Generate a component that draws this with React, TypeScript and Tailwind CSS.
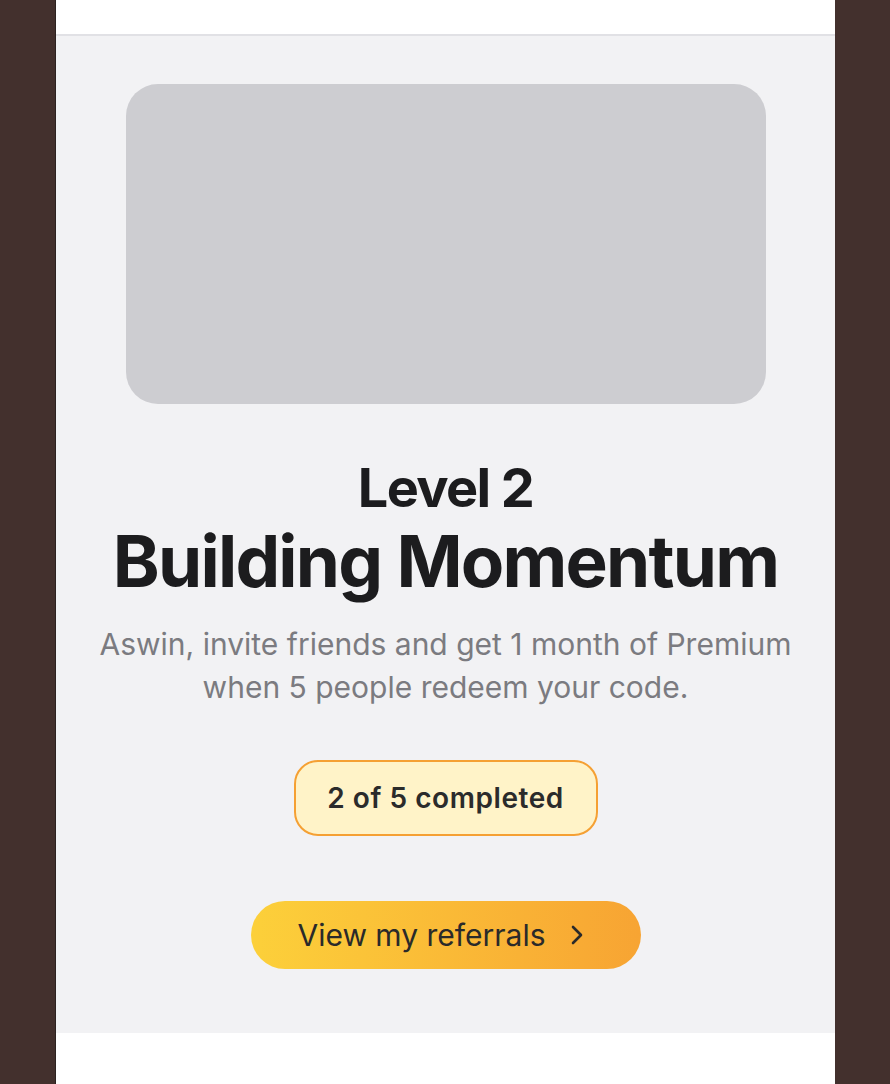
import React from 'react';

export default function App() {
    return (
        <div className="min-h-screen w-full bg-[#43302d] flex justify-center" style={{ fontFamily: 'Inter, "Noto Sans", sans-serif' }}>
            <div className="w-[780px] bg-white flex flex-col border-l border-[#2c2220]">
                <div className="h-[36px] border-b-2 border-[#e1e1e5]" />
                <div className="bg-[#f2f2f4] flex flex-col items-center pt-[48px] h-[997px]">
                    <div className="w-[640px] h-[320px] rounded-[32px] bg-[#cdcdd1]" />
                    <h2 className="mt-[54px] text-[54px] leading-[60px] font-bold tracking-[-0.03em] text-[#1c1c1e]">Level 2</h2>
                    <h1 className="mt-[4px] text-[71px] leading-[78px] font-bold tracking-[-0.025em] text-[#1c1c1e]">Building Momentum</h1>
                    <p className="mt-[23px] text-[30px] leading-[43px] text-[#7b7b80] text-center">
                        Aswin, invite friends and get 1 month of Premium<br />when 5 people redeem your code.
                    </p>
                    <div className="mt-[51px] w-[304px] h-[76px] rounded-[24px] border-2 border-[#f5a033] bg-[#fff3c8] flex items-center justify-center">
                        <span className="text-[28px] font-semibold text-[#2b2b2b] tracking-[0.02em]">2 of 5 completed</span>
                    </div>
                    <button className="mt-[65px] w-[390px] h-[68px] rounded-full bg-gradient-to-r from-[#fcd03a] to-[#f7a433] flex items-center justify-center gap-[24px] pr-[10px] text-[#2a2a2a]">
                        <span className="text-[30px]">View my referrals</span>
                        <svg width="14" height="22" viewBox="0 0 14 22" fill="none">
                            <path d="M3 3l8 8-8 8" stroke="#2a2a2a" strokeWidth="2.6" strokeLinecap="round" strokeLinejoin="round" />
                        </svg>
                    </button>
                </div>
                <div className="flex-1 bg-white" />
            </div>
        </div>
    );
}
